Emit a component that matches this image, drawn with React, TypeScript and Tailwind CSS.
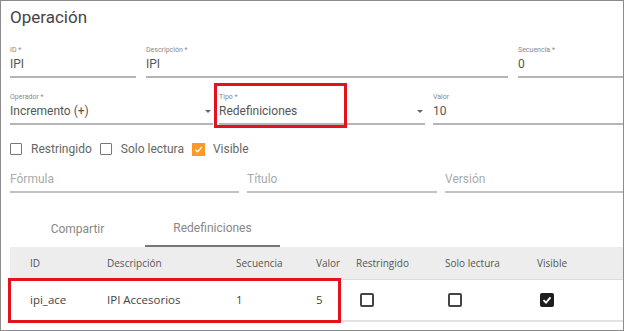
import React from "react";

const Field = ({
  label,
  value,
  width,
  arrow,
}: {
  label?: string;
  value: string;
  width: string;
  arrow?: boolean;
}) => (
  <div className={`${width} flex flex-col`}>
    <span className="text-[7px] leading-[10px] text-[#888] h-[10px]">{label}</span>
    <div className="flex items-center justify-between h-[18px]">
      <span className="text-[12px] text-[#555]">{value}</span>
      {arrow && (
        <span className="w-0 h-0 mr-[2px] border-l-[3px] border-r-[3px] border-t-[3px] border-l-transparent border-r-transparent border-t-[#666]"></span>
      )}
    </div>
    <div className="h-[2px] bg-[#b5b5b5] mt-[3px]"></div>
  </div>
);

const Placeholder = ({ text, width }: { text: string; width: string }) => (
  <div className={`${width} flex flex-col`}>
    <div className="h-[18px] flex items-center text-[12px] text-[#aaa]">{text}</div>
    <div className="h-[2px] bg-[#c2c2c2] mt-[3px]"></div>
  </div>
);

const Box = ({ checked }: { checked?: boolean }) =>
  checked ? (
    <span className="w-[13px] h-[13px] bg-[#fb9a28] flex items-center justify-center">
      <svg width="9" height="9" viewBox="0 0 10 10">
        <path d="M1.5 5.2 L4 7.5 L8.5 2.5" stroke="#fff" strokeWidth="1.4" fill="none" />
      </svg>
    </span>
  ) : (
    <span className="w-[12px] h-[12px] border-[1.5px] border-[#777] rounded-[1px]"></span>
  );

const TableBox = ({ checked }: { checked?: boolean }) =>
  checked ? (
    <span className="w-[14px] h-[14px] bg-[#1e1e1e] rounded-[2px] flex items-center justify-center">
      <svg width="10" height="10" viewBox="0 0 10 10">
        <path d="M1.5 5.2 L4 7.6 L8.5 2.3" stroke="#fff" strokeWidth="1.8" fill="none" />
      </svg>
    </span>
  ) : (
    <span className="w-[14px] h-[14px] border-2 border-[#444] rounded-[2px] bg-white"></span>
  );

export default function App() {
  return (
    <div
      className="relative w-[624px] h-[331px] bg-white border border-[#8c8c8c] pl-[9px] overflow-hidden"
      style={{ fontFamily: "Roboto, sans-serif" }}
    >
      <div className="text-[17px] leading-[20px] text-[#444] pt-[6px]">Operación</div>

      <div className="flex gap-[10px] mt-[18px]">
        <Field label="ID *" value="IPI" width="w-[126px]" />
        <Field label="Descripción *" value="IPI" width="w-[362px]" />
        <Field label="Secuencia *" value="0" width="flex-1" />
      </div>

      <div className="flex mt-[14px]">
        <Field label="Operador *" value="Incremento (+)" width="w-[203px]" arrow />
        <div className="w-[6px]"></div>
        <Field label="Tipo *" value="Redefiniciones" width="w-[206px]" arrow />
        <div className="w-[8px]"></div>
        <Field label="Valor" value="10" width="flex-1" />
      </div>

      <div className="flex items-center mt-[16px] text-[12px] text-[#666] h-[16px]">
        <Box />
        <span className="ml-[9px]">Restringido</span>
        <span className="ml-[8px]"></span>
        <Box />
        <span className="ml-[9px]">Solo lectura</span>
        <span className="ml-[8px]"></span>
        <Box checked />
        <span className="ml-[8px]">Visible</span>
      </div>

      <div className="flex gap-[8px] mt-[13px]">
        <Placeholder text="Fórmula" width="w-[229px]" />
        <Placeholder text="Título" width="w-[190px]" />
        <Placeholder text="Versión" width="flex-1" />
      </div>

      <div className="flex mt-[17px] text-[12px] text-[#888]">
        <div className="w-[135px] h-[37px] flex items-center justify-center">Compartir</div>
        <div className="w-[135px] h-[37px] flex items-center justify-center border-b-2 border-[#777]">
          Redefiniciones
        </div>
      </div>

      <div style={{ fontFamily: "'Open Sans', sans-serif" }}>
        <div className="flex items-center h-[32px] bg-[#ededed] text-[10px] text-[#555]">
          <div className="w-[87px] pl-[20px]">ID</div>
          <div className="w-[129px] pl-[10px]">Descripción</div>
          <div className="w-[80px] pl-[10px]">Secuencia</div>
          <div className="w-[40px] pl-[10px]">Valor</div>
          <div className="w-[89px] pl-[10px]">Restringido</div>
          <div className="w-[92px] pl-[10px]">Solo lectura</div>
          <div className="flex-1 pl-[10px]">Visible</div>
        </div>
        <div className="flex items-center h-[43px] border-t border-[#dcdcdc] border-b-2 border-b-[#e2e2e2] text-[11.5px] text-[#444]">
          <div className="w-[87px] pl-[20px]">ipi_ace</div>
          <div className="w-[129px] pl-[10px]">IPI Accesorios</div>
          <div className="w-[80px] pl-[10px]">1</div>
          <div className="w-[40px] pl-[10px]">5</div>
          <div className="w-[89px] pl-[14px] flex">
            <TableBox />
          </div>
          <div className="w-[92px] pl-[13px] flex">
            <TableBox />
          </div>
          <div className="flex-1 pl-[13px] flex">
            <TableBox checked />
          </div>
        </div>
      </div>

      <div className="absolute left-[213px] top-[82px] w-[133px] h-[45px] border-[3px] border-[#e3121c]"></div>
      <div className="absolute left-[7px] top-[277px] w-[333px] h-[45px] border-[3px] border-[#e3121c]"></div>
    </div>
  );
}
